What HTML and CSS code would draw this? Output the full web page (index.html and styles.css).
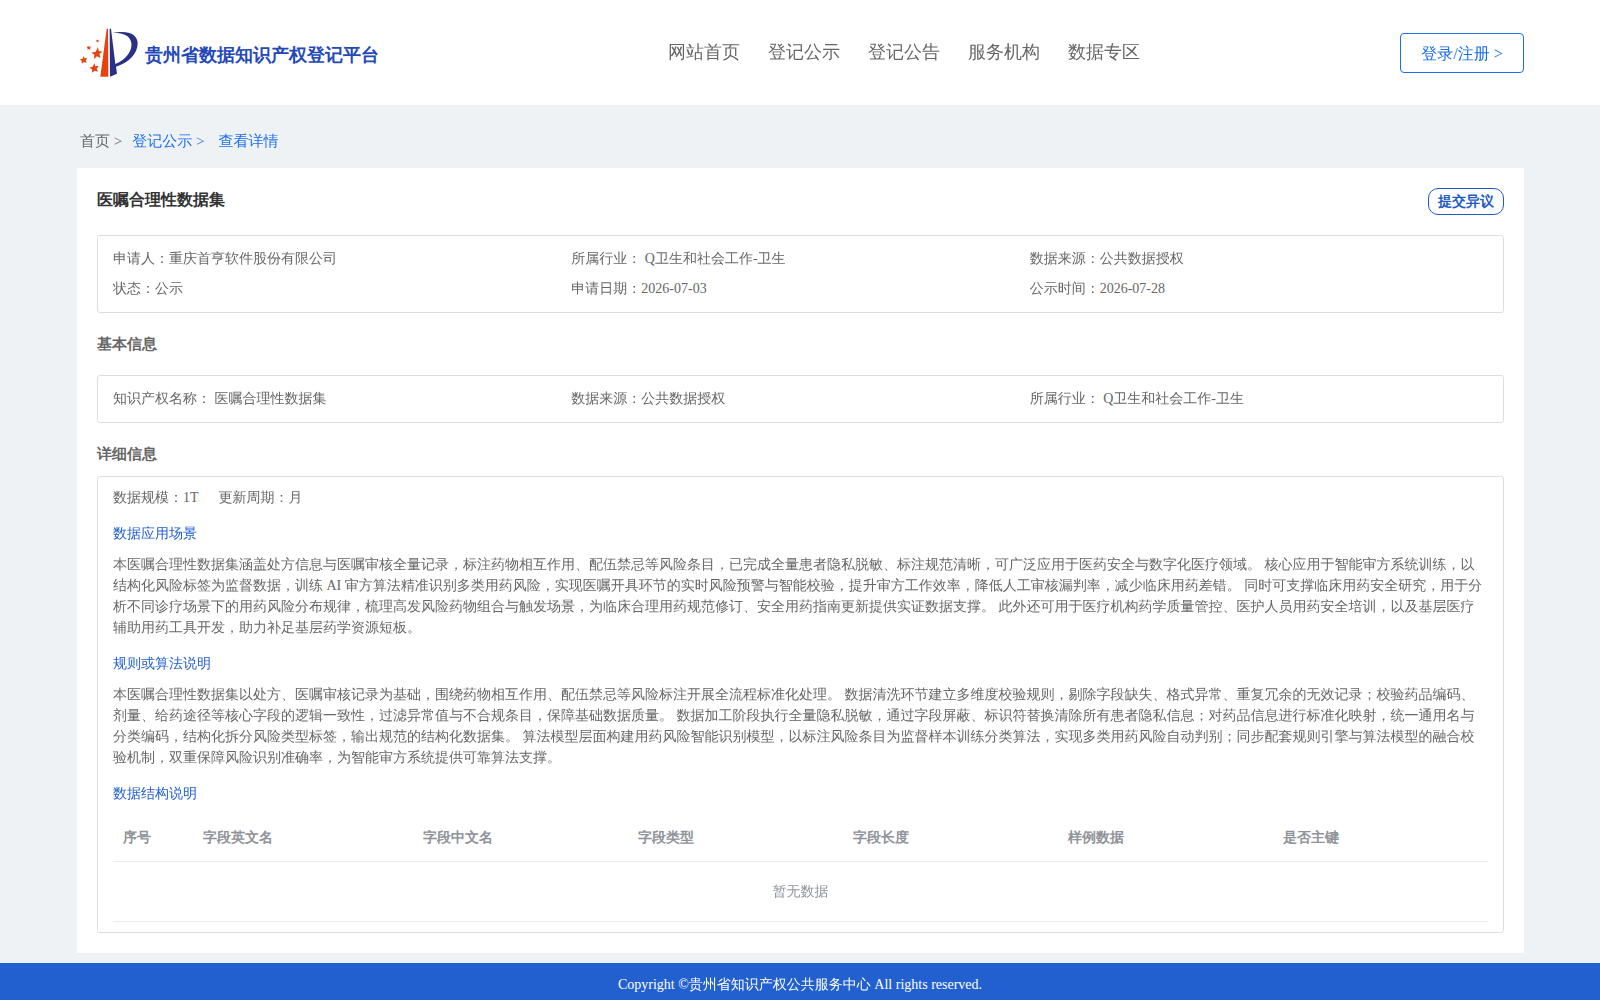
FILE: index.html
```html
<!DOCTYPE html>
<html lang="en">
<head>
<meta charset="utf-8">
<meta name="viewport" content="width=device-width, initial-scale=1">
<title>贵州省数据知识产权登记平台</title>
<link rel="stylesheet" href="styles.css">
</head>
<body>
<header class="header">
  <a class="logo" href="#">
    <svg class="logo-mark" viewBox="30 22 174 156" aria-hidden="true">
      <path fill="#e8430f" d="M110 27h4l1 144H91z"/>
      <path fill="#2a3087" d="M119 27h4l13 106c32-14 52-40 48-64-4-22-26-30-56-30 61-9 73 12 75 30 1 34-29 60-65 72l3 21-21 9z"/>
      <g fill="#e8430f">
        <path d="M84 82l2 12 11 2-9 7 4 12-11-5-9 8 1-13-9-6 13-3z"/>
        <path d="M73 131l3 9 11-1-7 8 4 9-10-3-8 6 0-10-8-5 10-3z"/>
        <path d="M41 109l3 7 8 0-5 6 3 8-8-3-7 5 0-9-6-4 9-2z"/>
        <path d="M54 79l3 2 6-1-3 5 2 6-5-3-5 2 1-5-4-4 4 0z"/>
        <path d="M83 59l1 3 3 0-2 3 1 3-3-1-3 1 0-3-2-3 3 0z"/>
      </g>
    </svg>
    <span class="logo-text">贵州省数据知识产权登记平台</span>
  </a>
  <nav class="nav">
    <a href="#">网站首页</a>
    <a href="#">登记公示</a>
    <a href="#">登记公告</a>
    <a href="#">服务机构</a>
    <a href="#">数据专区</a>
  </nav>
  <button class="login" type="button">登录/注册 &gt;</button>
</header>

<main class="page">
  <nav class="breadcrumb">
    <a href="#">首页 &gt;</a>
    <a class="active" href="#">登记公示 &gt;</a>
    <a class="active current" href="#">查看详情</a>
  </nav>

  <article class="card">
    <div class="card-head">
      <h1 class="title">医嘱合理性数据集</h1>
      <button class="objection" type="button">提交异议</button>
    </div>

    <div class="box grid">
      <div>申请人：重庆首亨软件股份有限公司</div>
      <div>所属行业： Q卫生和社会工作-卫生</div>
      <div>数据来源：公共数据授权</div>
      <div>状态：公示</div>
      <div>申请日期：2026-07-03</div>
      <div>公示时间：2026-07-28</div>
    </div>

    <h2 class="section basic">基本信息</h2>
    <div class="box grid">
      <div>知识产权名称： 医嘱合理性数据集</div>
      <div>数据来源：公共数据授权</div>
      <div>所属行业： Q卫生和社会工作-卫生</div>
    </div>

    <h2 class="section">详细信息</h2>
    <div class="box detail">
      <div class="scale"><span>数据规模：1T</span><span>更新周期：月</span></div>
      <h3 class="sub">数据应用场景</h3>
      <p class="text">本医嘱合理性数据集涵盖处方信息与医嘱审核全量记录，标注药物相互作用、配伍禁忌等风险条目，已完成全量患者隐私脱敏、标注规范清晰，可广泛应用于医药安全与数字化医疗领域。 核心应用于智能审方系统训练，以结构化风险标签为监督数据，训练 AI 审方算法精准识别多类用药风险，实现医嘱开具环节的实时风险预警与智能校验，提升审方工作效率，降低人工审核漏判率，减少临床用药差错。 同时可支撑临床用药安全研究，用于分析不同诊疗场景下的用药风险分布规律，梳理高发风险药物组合与触发场景，为临床合理用药规范修订、安全用药指南更新提供实证数据支撑。 此外还可用于医疗机构药学质量管控、医护人员用药安全培训，以及基层医疗辅助用药工具开发，助力补足基层药学资源短板。</p>
      <h3 class="sub">规则或算法说明</h3>
      <p class="text">本医嘱合理性数据集以处方、医嘱审核记录为基础，围绕药物相互作用、配伍禁忌等风险标注开展全流程标准化处理。 数据清洗环节建立多维度校验规则，剔除字段缺失、格式异常、重复冗余的无效记录；校验药品编码、剂量、给药途径等核心字段的逻辑一致性，过滤异常值与不合规条目，保障基础数据质量。 数据加工阶段执行全量隐私脱敏，通过字段屏蔽、标识符替换清除所有患者隐私信息；对药品信息进行标准化映射，统一通用名与分类编码，结构化拆分风险类型标签，输出规范的结构化数据集。 算法模型层面构建用药风险智能识别模型，以标注风险条目为监督样本训练分类算法，实现多类用药风险自动判别；同步配套规则引擎与算法模型的融合校验机制，双重保障风险识别准确率，为智能审方系统提供可靠算法支撑。</p>
      <h3 class="sub">数据结构说明</h3>
      <table class="table">
        <colgroup><col class="col-index"><col class="col-name"><col><col><col><col><col></colgroup>
        <thead>
          <tr><th>序号</th><th>字段英文名</th><th>字段中文名</th><th>字段类型</th><th>字段长度</th><th>样例数据</th><th>是否主键</th></tr>
        </thead>
        <tbody>
          <tr><td class="empty" colspan="7">暂无数据</td></tr>
        </tbody>
      </table>
    </div>
  </article>
</main>

<footer class="footer">Copyright ©贵州省知识产权公共服务中心 All rights reserved.</footer>
</body>
</html>
```

FILE: styles.css
```css
* {
  box-sizing: border-box;
}

body {
  margin: 0;
  background: #eef2f5;
  color: #666;
  font-family: "Liberation Serif", "WenQuanYi Zen Hei", "Noto Sans CJK SC", serif;
  font-size: 14px;
}

h1, h2, h3, p {
  margin: 0;
}

a {
  color: inherit;
  text-decoration: none;
}

button {
  font-family: inherit;
  background: #fff;
  cursor: pointer;
}

.logo-text,
.title,
.section,
.objection,
.table th {
  font-family: "Liberation Serif", serif;
  font-weight: bold;
}

.header {
  display: flex;
  align-items: center;
  height: 105px;
  padding: 0 76px 0 80px;
  background: #fff;
}

.logo {
  display: flex;
  align-items: center;
  gap: 7px;
  width: 328px;
}

.logo-mark {
  width: 58px;
  height: 52px;
}

.logo-text {
  padding-top: 4px;
  color: #2448b8;
  font-size: 18px;
  white-space: nowrap;
}

.nav {
  display: flex;
  gap: 28px;
  margin: 0 auto;
  padding-bottom: 2px;
  font-size: 18px;
  white-space: nowrap;
}

.login {
  width: 124px;
  height: 40px;
  padding: 3px 0 0;
  border: 1px solid #1a6fee;
  border-radius: 4px;
  color: #1a6fee;
  font-size: 16px;
}

.page {
  padding: 0 76px 10px 77px;
}

.breadcrumb {
  display: flex;
  align-items: center;
  gap: 10px;
  height: 63px;
  padding: 10px 3px 0;
  font-size: 15px;
}

.active {
  color: #1a6fee;
}

.current {
  margin-left: 4px;
}

.card {
  padding: 20px;
  background: #fff;
}

.card-head {
  display: flex;
  justify-content: space-between;
  align-items: flex-start;
  height: 47px;
}

.title {
  color: #333;
  font-size: 16px;
  line-height: 24px;
}

.objection {
  width: 76px;
  height: 27px;
  padding: 0;
  border: 1px solid #1f5bc4;
  border-radius: 10px;
  color: #1f5bc4;
  font-size: 14px;
}

.box {
  padding: 8px 15px;
  border: 1px solid #dcdee0;
  border-radius: 3px;
}

.grid {
  display: grid;
  grid-template-columns: repeat(3, 1fr);
  line-height: 30px;
}

.section {
  margin-bottom: 11px;
  padding-top: 20px;
  font-size: 15px;
  line-height: 22px;
}

.basic {
  margin-bottom: 20px;
}

.detail {
  padding: 11px 15px 10px;
}

.scale {
  display: flex;
  gap: 20px;
  line-height: 20px;
}

.sub {
  margin: 10px 0 5px;
  color: #2260d0;
  font-size: 14px;
  font-weight: normal;
  line-height: 31px;
}

.text {
  line-height: 21px;
}

.table {
  width: 100%;
  border-collapse: separate;
  border-spacing: 0;
  table-layout: fixed;
  color: #909399;
}

.col-index {
  width: 80px;
}

.col-name {
  width: 220px;
}

.table th,
.table td {
  padding: 0 10px;
  border-bottom: 1px solid #ebeef5;
  text-align: left;
}

.table th {
  height: 48px;
}

.table .empty {
  height: 60px;
  text-align: center;
}

.footer {
  padding: 14px 0 7px;
  background: #2260d0;
  color: #fff;
  line-height: 16px;
  text-align: center;
}
```
